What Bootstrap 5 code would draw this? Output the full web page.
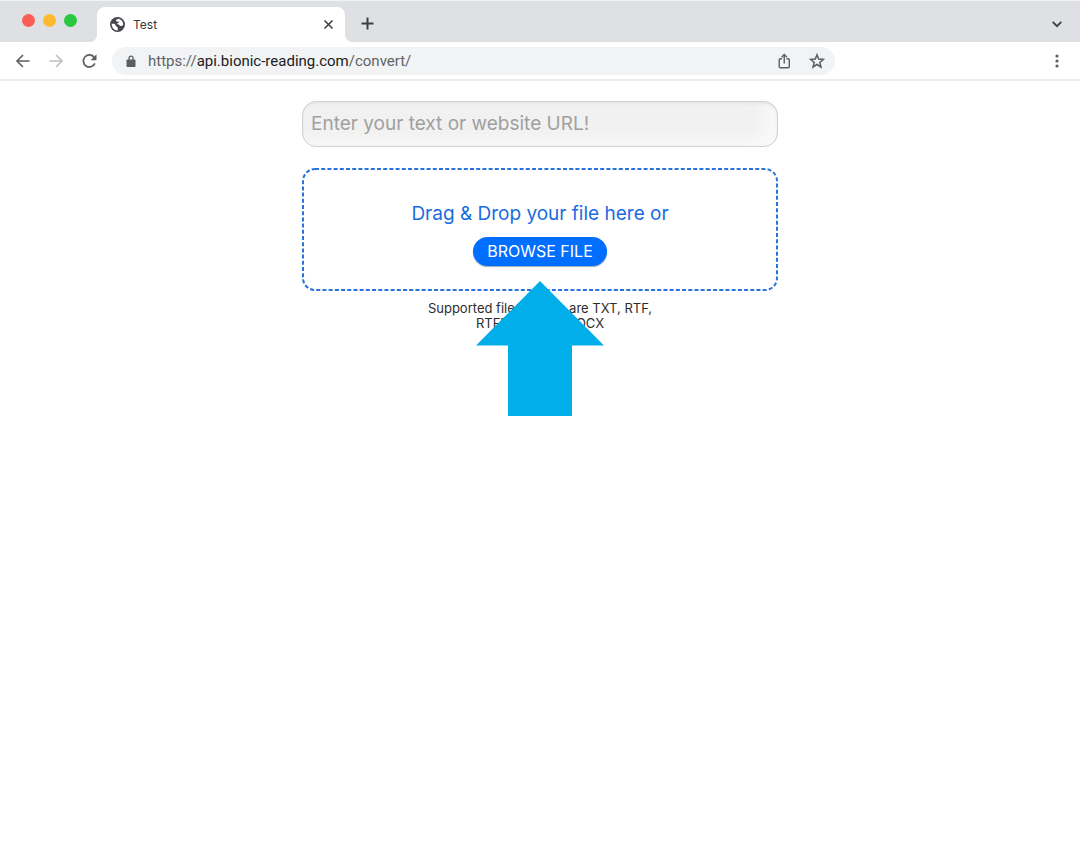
<!DOCTYPE html>
<html lang="en">
<head>
<meta charset="utf-8">
<meta name="viewport" content="width=device-width, initial-scale=1">
<title>Test</title>
<link href="https://cdn.jsdelivr.net/npm/bootstrap@5.3.0/dist/css/bootstrap.min.css" rel="stylesheet">
<style>
  body { font-family: Inter, "Liberation Sans", sans-serif; color: #222; background: #fff; }
  svg { display: block; flex: none; }
  .tab-strip { height: 42px; background: #dee0e4; border-top: 1px solid #f1f2f4; padding-right: 16px; }
  .window-dots { gap: 8px; padding: 13px 20px 0 22px; }
  .window-dots span { width: 13px; height: 13px; border-radius: 50%; }
  .dot-close { background: #fb5d55; }
  .dot-min { background: #fcbb2f; }
  .dot-max { background: #28c840; }
  .page-tab { position: relative; width: 248px; margin-top: 6px; padding: 0 10px 0 13px; background: #fff; border-radius: 8px 8px 0 0; font-size: 12px; line-height: 16px; color: #34363a; }
  .page-tab::before, .page-tab::after { content: ""; position: absolute; bottom: 0; width: 8px; height: 8px; }
  .page-tab::before { right: 100%; background: radial-gradient(circle at 0 0, transparent 8px, #fff 8px); }
  .page-tab::after { left: 100%; background: radial-gradient(circle at 100% 0, transparent 8px, #fff 8px); }
  .icon-btn { display: flex; padding: 0; border: 0; background: none; color: #5c5e62; }
  .tool-bar { height: 39px; border-bottom: 2px solid #ebecee; padding: 0 16px 0 15px; }
  .nav-icons { gap: 17px; width: 97px; }
  .address { width: 723px; height: 28px; border-radius: 14px; background: #f1f3f4; padding: 0 10px 0 14px; font: 15px/20px Roboto, sans-serif; color: #5f6368; }
  .address a { margin-left: 12px; color: inherit; text-decoration: none; }
  .address b { font-weight: 400; color: #202124; }
  .converter { max-width: 476px; padding-top: 20px; }
  .text-entry { height: 46px; padding: 0 8px 2px; border: 1px solid #d0d0d0; border-radius: 14px; background: #f1f1f1; font-size: 19px; line-height: 24px; box-shadow: inset 0 2px 3px #e6e6e6, inset -12px -6px 14px #f9f9f9; }
  .text-entry::placeholder { color: #a0a0a0; opacity: 1; }
  .drop-zone { position: relative; margin-top: 21px; height: 123px; padding-top: 34px; color: #1b6be0; font-size: 19px; line-height: 24px; }
  .drop-frame { position: absolute; inset: 0; width: 100%; height: 100%; overflow: visible; pointer-events: none; }
  .drop-frame rect { width: calc(100% - 2px); height: calc(100% - 2px); }
  .browse { height: 29px; margin-top: 11px; padding: 0 14px 1px; border: 0; border-radius: 15px; background: #006eff; color: #fff; font-size: 16px; line-height: 20px; box-shadow: 0 1px 1px #9aa9bd; }
  .formats { width: 240px; margin-top: 10px; font-size: 13px; line-height: 15px; color: #2d2d2d; }
  .pointer-arrow { position: absolute; top: 113px; left: 50%; margin-left: -64px; z-index: 2; }
</style>
</head>
<body class="d-flex flex-column min-vh-100">
<header>
  <div class="tab-strip d-flex">
    <div class="window-dots d-flex"><span class="dot-close"></span><span class="dot-min"></span><span class="dot-max"></span></div>
    <div class="page-tab d-flex align-items-center">
      <svg width="15" height="15" viewBox="0 0 15 15"><circle cx="7.500" cy="7.500" r="7.500" fill="#46484c"/><path d="M8.300 1.700c-1 1-2.100.6-2.300 1.600s.9 1.500 2 1.300c.8 0 1 .7.6 1.200-.6.700-1.500.5-1.700 1.200-.1.700 1.200.5 1.900.7.9.3.900 1.100 1.900 1.300.9.100 1.400-.8 2.500-.8A5.900 5.900 0 0 0 8.300 1.700zM1.700 6.600a5.900 5.900 0 0 0 6.100 6.800c.1-1-.3-1.600-.1-2.400.3-1-1-1.300-1.600-1.800-.7-.7-.5-1.700-1.500-2.200-.9-.4-1.900.1-2.900-.4z" fill="#fff"/></svg>
      <span class="ms-2">Test</span>
      <button class="icon-btn ms-auto" aria-label="Close tab"><svg width="13" height="13" viewBox="0 0 13 13" fill="none" stroke="#3c4043" stroke-width="1.600"><path d="M2.500 2.500l8 8M10.500 2.500l-8 8"/></svg></button>
    </div>
    <button class="icon-btn ms-3 mt-1 align-items-center" aria-label="New tab"><svg width="13" height="13" viewBox="0 0 13 13" fill="none" stroke="#3c4043" stroke-width="2"><path d="M6.500 .5v12M.5 6.500h12"/></svg></button>
    <button class="icon-btn ms-auto mt-1 align-items-center" aria-label="Search tabs"><svg width="14" height="12" viewBox="0 0 14 12" fill="none" stroke="#3c4043" stroke-width="1.800"><path d="M2.700 3.800L7 8.200l4.300-4.400"/></svg></button>
  </div>
  <div class="tool-bar d-flex align-items-center">
    <div class="nav-icons d-flex">
      <button class="icon-btn" aria-label="Back"><svg width="16" height="16" viewBox="0 0 16 16" fill="none" stroke="currentColor" stroke-width="1.600"><path d="M14.500 8h-12M8 2L2 8l6 6"/></svg></button>
      <button class="icon-btn" aria-label="Forward"><svg width="16" height="16" viewBox="0 0 16 16" fill="none" stroke="#bcbec1" stroke-width="1.600"><path d="M1.500 8h12M8 2l6 6-6 6"/></svg></button>
      <button class="icon-btn" aria-label="Reload"><svg width="16" height="16" viewBox="0 0 16 16" fill="none" stroke="currentColor" stroke-width="1.700"><path d="M13.900 10.300A6 6 0 1 1 13.300 4.500"/><path d="M15.500 1.200v6h-6z" fill="currentColor" stroke="none"/></svg></button>
    </div>
    <div class="address d-flex align-items-center">
      <svg width="10" height="12" viewBox="0 0 10 12"><path d="M3 5V3.200a2 2 0 0 1 4 0V5" fill="none" stroke="#5c5e62" stroke-width="1.300"/><rect x=".5" y="4.500" width="9" height="7.500" rx="1" fill="#5c5e62"/></svg>
      <a href="https://api.bionic-reading.com/convert/">https://<b>api.bionic-reading.com</b>/convert/</a>
      <button class="icon-btn ms-auto me-3" aria-label="Share"><svg width="16" height="16" viewBox="0 0 16 16" fill="none" stroke="currentColor" stroke-width="1.400"><path d="M5 5.700H3.500a1.300 1.300 0 0 0-1.300 1.300v6.500a1.300 1.300 0 0 0 1.300 1.300h7.500a1.300 1.300 0 0 0 1.300-1.300V7A1.300 1.300 0 0 0 11 5.700H9.500M7.250 10.500V1.800M4.500 4.200l2.750-2.700L10 4.200"/></svg></button>
      <button class="icon-btn" aria-label="Bookmark this page"><svg width="16" height="16" viewBox="0 0 16 16" fill="none" stroke="currentColor" stroke-width="1.500"><path d="M8 1.800l1.700 4.300 4.700.3-3.600 3 1.200 4.600L8 11.500 4 14l1.200-4.600-3.600-3 4.700-.3z"/></svg></button>
    </div>
    <button class="icon-btn ms-auto" aria-label="Menu"><svg width="14" height="16" viewBox="0 0 14 16" fill="currentColor"><circle cx="7" cy="3" r="1.600"/><circle cx="7" cy="8" r="1.600"/><circle cx="7" cy="13" r="1.600"/></svg></button>
  </div>
</header>
<main class="converter w-100 mx-auto flex-grow-1">
  <input class="text-entry form-control" type="text" aria-label="Text or website URL" placeholder="Enter your text or website URL!">
  <section class="drop-zone text-center">
    <svg class="drop-frame"><rect x="1" y="1" rx="12" fill="none" stroke="#2874da" stroke-width="2" stroke-dasharray="4 2.200"/></svg>
    <div>Drag &amp; Drop your file here or</div>
    <button class="browse" type="button">BROWSE FILE</button>
    <svg class="pointer-arrow" width="128" height="135" viewBox="0 0 128 135"><path d="M64 0l64 64.500H96V135H32V64.500H0z" fill="#02aeea"/></svg>
  </section>
  <p class="formats mx-auto mb-0 text-center">Supported file formats are TXT, RTF,<br>RTFD, EPUB &amp; DOCX</p>
</main>
<script src="https://cdn.jsdelivr.net/npm/bootstrap@5.3.0/dist/js/bootstrap.bundle.min.js"></script>
</body>
</html>
